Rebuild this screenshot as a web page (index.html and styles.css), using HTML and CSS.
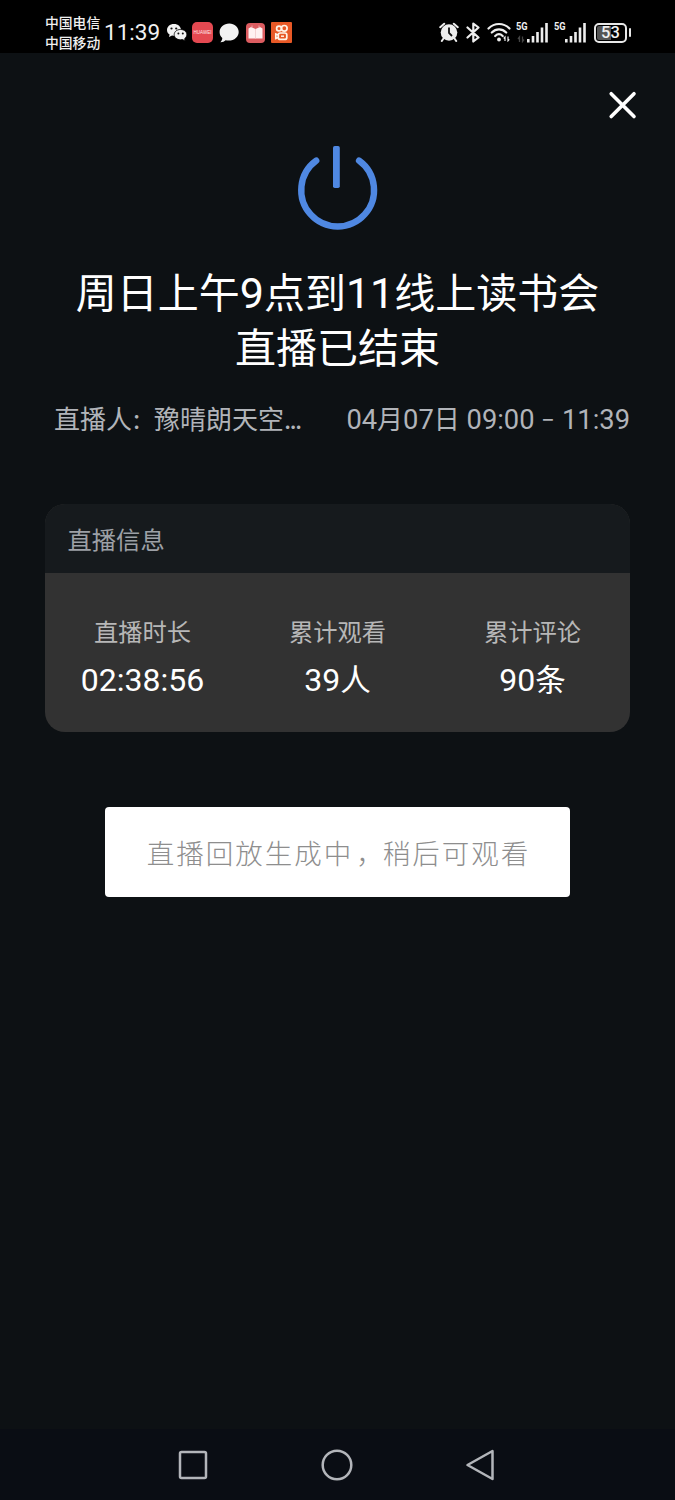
FILE: index.html
```html
<!DOCTYPE html>
<html lang="zh-CN">
<head>
<meta charset="utf-8">
<title>直播已结束</title>
<link rel="stylesheet" href="styles.css">
</head>
<body>
<div class="screen">
  <header class="status">
    <div class="carriers"><span>中国电信</span><span>中国移动</span></div>
    <div class="clock"><b>11:39</b></div>
    <div class="notices">
      <svg class="n-wechat" width="22" height="20" viewBox="0 0 22 20">
        <path d="M8 1C3.700 1 1 3.700 1 7c0 2 1 3.600 2.600 4.600L3 14l3-1.500 3 .4C15 12 15 8 15 7c0-3.300-2.800-6-7-6z" fill="#f2f2f2"/>
        <path d="M14.500 6.500c-3.800 0-6.300 2.300-6.300 5.100s2.700 5.200 6.300 5.200l2-.3 2.700 1.400-.6-2.200c1.400-1 2.200-2.500 2.200-4.100 0-2.800-2.500-5.100-6.300-5.100z" fill="#f2f2f2" stroke="#000" stroke-width=".8"/>
        <g fill="#111"><circle cx="5.500" cy="5.500" r="1.100"/><circle cx="10.200" cy="5.500" r="1.100"/><circle cx="12.400" cy="10.500" r="1"/><circle cx="16.800" cy="10.500" r="1"/></g>
      </svg>
      <div class="huawei"><span>HUAWEI</span></div>
      <svg class="n-chat" width="20" height="20" viewBox="0 0 20 20"><path d="M10.300.5C4.800.5.600 4.200.600 9c0 2.500 1 4.500 2.700 6.100.1 1.500-.8 3-1.900 4.100 2 .1 4-.7 5.200-1.900 7.500 1.500 13.100-2.800 13.100-8.300 0-4.800-4.100-8.500-9.400-8.500z" fill="#f2f2f2"/></svg>
      <svg class="n-book" width="19" height="20" viewBox="0 0 19 20"><rect width="19" height="20" rx="4" fill="#dc5c60"/><path d="M2.500 5.500 5 4l4.500 2L14 4l2.500 1.500v10H2.500z" fill="#fff0f0"/><path d="M9.500 6v9.500" stroke="#f3c9ca" stroke-width=".8"/><path d="M6 4.500v-2M13 4.500v-2" stroke="#eda6a8" stroke-width="1"/></svg>
      <svg class="n-kuai" width="21" height="21" viewBox="0 0 21 21"><rect width="21" height="21" rx="1" fill="#e85926"/><g fill="none" stroke="#fff4e8" stroke-width="1.700"><circle cx="8" cy="6.500" r="2.400"/><circle cx="13.300" cy="6.300" r="2.800"/><rect x="7.300" y="11" width="8.500" height="6.400" rx="2"/><path d="m7.300 13-2.500-1v4.500l2.500-1"/></g><path d="M10 14.200h3" stroke="#fff4e8" stroke-width="1.500"/></svg>
    </div>
    <div class="system">
      <svg class="s-alarm" width="20" height="20" viewBox="0 0 20 20"><circle cx="10" cy="10.500" r="8.300" fill="#eee"/><path d="m1.200 5.200 4-3.500M18.800 5.200l-4-3.500M4.500 16.500 2.800 19M15.500 16.500l1.700 2.500" stroke="#eee" stroke-width="2" stroke-linecap="round"/><path d="M10 5.500V11l3 3" fill="none" stroke="#111" stroke-width="1.800"/></svg>
      <svg class="s-bt" width="15" height="21" viewBox="0 0 15 21"><path d="m1.500 5.500 11 10-5.200 4V1.500l5.200 4-11 10" fill="none" stroke="#eee" stroke-width="2.200" stroke-linejoin="round" stroke-linecap="round"/></svg>
      <svg class="s-wifi" width="24" height="20" viewBox="0 0 24 20"><g fill="none" stroke="#eee" stroke-width="2.200" stroke-linecap="round"><path d="M1.500 6.500c6-6 15-6 21 0M4.800 10.500c4.200-4.200 10.200-4.200 14.400 0M8.200 14c2.300-2.200 5.200-2.200 7.500 0"/></g><circle cx="12" cy="17.500" r="1.900" fill="#eee"/><path d="M18 19v-4l-1.300 1.500M21 14.500v4.300l1.300-1.500" fill="none" stroke="#eee" stroke-width="1.200"/></svg>
      <div class="signal">
        <span class="gen">5G</span>
        <svg width="33" height="21" viewBox="0 0 33 21"><path d="M3.500 20v-5l-1.500 2M6.500 14.500v5L8 17.500" fill="none" stroke="#444" stroke-width="1.300"/><path d="M12.300 20.500V17M17 20.500V14M21.500 20.500V10M26 20.500V5.500M30.500 20.500V1" stroke="#eee" stroke-width="2.600"/></svg>
      </div>
      <div class="signal">
        <span class="gen">5G</span>
        <svg width="33" height="21" viewBox="0 0 33 21"><path d="M12.300 20.500V17M17 20.500V14M21.500 20.500V10M26 20.500V5.500M30.500 20.500V1" stroke="#eee" stroke-width="2.600"/></svg>
      </div>
      <div class="battery"><span>53</span></div>
      <i class="cap"></i>
    </div>
  </header>

  <main class="page">
    <div class="close-row">
      <svg width="30" height="30" viewBox="0 0 30 30"><path d="m3.200 3.700 22.800 22.800M26 3.700 3.200 26.500" stroke="#fff" stroke-width="3.600" stroke-linecap="round"/></svg>
    </div>
    <svg class="power" width="84" height="86" viewBox="0 0 84 86"><path d="M20.200 15.700a36.400 36.400 0 1 0 42.900 0" fill="none" stroke="#4f88e2" stroke-width="6.400" stroke-linecap="round"/><rect x="37" y="1" width="6.800" height="42" rx="1.800" fill="#4f88e2"/></svg>
    <h1 class="title"><span>周日上午<b>9</b>点到<b>11</b>线上读书会</span><span>直播已结束</span></h1>
    <div class="meta">
      <div class="host">直播人<i>:</i>豫晴朗天空<em>...</em></div>
      <div class="date"><b>04</b>月<b>07</b>日<b> 09:00 </b><span class="dash">–</span><b> 11:39</b></div>
    </div>
    <section class="card">
      <h2 class="card-head">直播信息</h2>
      <div class="stats">
        <div class="stat"><span class="label">直播时长</span><span class="value"><b>02:38:56</b></span></div>
        <div class="stat"><span class="label">累计观看</span><span class="value"><b>39</b>人</span></div>
        <div class="stat"><span class="label">累计评论</span><span class="value"><b>90</b>条</span></div>
      </div>
    </section>
    <button class="replay">直播回放生成<span class="wide">中</span><span class="comma">，</span>稍后可观看</button>
  </main>

  <nav class="nav">
    <svg width="30" height="30" viewBox="0 0 30 30"><rect x="2" y="2" width="26" height="26" rx="1.500"/></svg>
    <svg width="32" height="32" viewBox="0 0 32 32"><circle cx="16" cy="16" r="14.300"/></svg>
    <svg width="30" height="32" viewBox="0 0 30 32"><path d="M27.500 2v28L2.500 16z"/></svg>
  </nav>
</div>
</body>
</html>
```
FILE: styles.css
```css
* { box-sizing: border-box; }
body { margin: 0; background: #0d1114; font-family: "Noto Sans CJK SC", sans-serif; color: #fff; }
svg { display: block; flex: none; }
h1, h2 { margin: 0; font-weight: 400; }
b, i, em { font-weight: inherit; font-style: normal; }
b { font-family: Roboto, sans-serif; font-size: 1.05em; line-height: 1; white-space: pre; }
.screen { width: 675px; height: 1500px; display: flex; flex-direction: column; overflow: hidden; }

.status { height: 53px; flex: none; background: #000; display: flex; align-items: flex-start; padding-left: 45px; color: #f0f0f0; white-space: nowrap; }
.carriers { width: 59px; padding-top: 12px; display: flex; flex-direction: column; font-size: 13.800px; line-height: 20px; font-weight: 500; }
.clock { width: 62px; padding-top: 16px; font-size: 21.500px; line-height: 30px; }
.notices { display: flex; align-items: flex-start; padding-top: 22px; }
.n-wechat { margin-top: 1px; }
.huawei { width: 21px; height: 21px; margin: 0 6px 0 4px; border-radius: 5px; background: #e44951; display: flex; align-items: center; justify-content: center; }
.huawei span { font: 4.500px/6px "Liberation Sans", sans-serif; color: #ffe8e8; }
.n-chat { margin: 1px 7px 0 0; }
.n-book { margin: 1px 6px 0 0; }
.system { margin-left: auto; padding: 22px 44px 0 0; display: flex; align-items: flex-start; }
.s-bt { margin: 0 6px 0 7px; }
.signal { width: 33px; margin-left: 5px; display: grid; }
.signal > * { grid-area: 1 / 1; }
.gen { font: bold 10.500px/10px Roboto, sans-serif; transform: scaleX(.88); transform-origin: 0 0; }
.battery { width: 33px; height: 20px; margin: 1px 2px 0 7px; border: 2px solid #e8e8e8; border-radius: 5px; padding: 1px; background: linear-gradient(90deg, #555 14px, #000 14px) content-box; display: flex; align-items: center; justify-content: center; }
.battery span { font: 500 16.500px/16px Roboto, sans-serif; }
.cap { width: 2px; height: 9px; margin-top: 6px; background: #e8e8e8; border-radius: 1px; }

.page { flex: 1; padding: 37px 45px 0; display: flex; flex-direction: column; }
.close-row { display: flex; justify-content: flex-end; margin-right: -8px; }
.power { margin: 25px 0 0 251px; }
.title { margin-top: 32px; display: flex; flex-direction: column; align-items: center; font-size: 41px; line-height: 55px; white-space: nowrap; }
.title span { height: 55px; }
.meta { margin-top: 26px; height: 38px; display: flex; justify-content: space-between; padding-left: 9px; font-size: 26px; line-height: 38px; color: #b1b4b9; white-space: nowrap; }
.host i { display: inline-block; width: 22px; padding-left: 1px; }
.host em { letter-spacing: -1.800px; }
.dash { display: inline-block; transform: translateY(-2px) scaleX(.85); }
.card { margin-top: 67px; height: 228px; border-radius: 20px; overflow: hidden; background: #323232; }
.card-head { height: 69px; padding-left: 22.500px; background: #161a1d; color: #9da0a6; font-size: 24.300px; line-height: 69px; }
.stats { display: grid; grid-template-columns: repeat(3, 1fr); padding-top: 38px; }
.stat { display: flex; flex-direction: column; align-items: center; }
.label { font-size: 24.300px; line-height: 40px; color: #b7b7b7; }
.value { margin-top: 7px; height: 40px; font-size: 30.500px; line-height: 40px; }
.replay { align-self: center; margin-top: 75px; width: 465px; height: 90px; padding: 0 0 1px 2px; border: 0; border-radius: 4px; background: #fff; color: #8e8e8e; font: 300 27.500px/88px "Noto Sans CJK SC", sans-serif; letter-spacing: 2px; white-space: nowrap; }
.wide { letter-spacing: 5px; }
.comma { letter-spacing: -1px; }

.nav { height: 71px; flex: none; background: #0a0d14; display: flex; justify-content: space-between; align-items: center; padding: 0 180px 0 178px; }
.nav svg { fill: none; stroke: #b3b5ba; stroke-width: 2.500; stroke-linejoin: round; }
```
